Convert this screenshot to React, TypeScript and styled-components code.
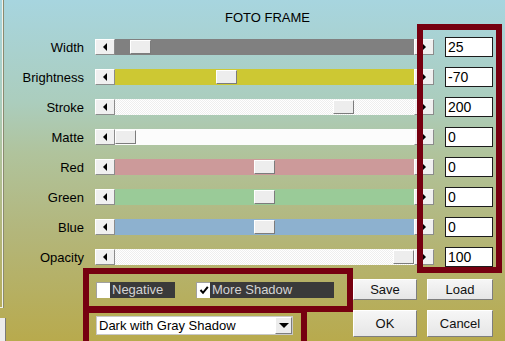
import styled, { createGlobalStyle } from "styled-components";

const GlobalStyle = createGlobalStyle`
  html, body {
    margin: 0;
    padding: 0;
  }
  body {
    width: 505px;
    height: 341px;
    overflow: hidden;
    font-family: "Liberation Sans", Arial, sans-serif;
  }
`;

const DITHER =
  "repeating-conic-gradient(#ffffff 0 25%, #eeeeee 0 50%) 0 0 / 2px 2px";

interface SliderRow {
  label: string;
  value: string;
  track: string;
  thumb: number;
}

const rows: SliderRow[] = [
  { label: "Width", value: "25", track: "#808080", thumb: 15 },
  { label: "Brightness", value: "-70", track: "#cdc833", thumb: 101 },
  { label: "Stroke", value: "200", track: DITHER, thumb: 218 },
  { label: "Matte", value: "0", track: "#fcfcfc", thumb: 0 },
  { label: "Red", value: "0", track: "#cc9a9a", thumb: 139 },
  { label: "Green", value: "0", track: "#9acb98", thumb: 139 },
  { label: "Blue", value: "0", track: "#8db1cf", thumb: 139 },
  { label: "Opacity", value: "100", track: DITHER, thumb: 278 },
];

const App = () => {
  return (
    <>
      <GlobalStyle />
      <Window>
        <Side>
          <SidePanel />
          <SideButton />
        </Side>
        <Main>
          <Title>FOTO FRAME</Title>
          <Rows>
            {rows.map((row) => (
              <Row key={row.label}>
                <Label>{row.label}</Label>
                <Slider>
                  <ArrowButton>
                    <Arrow $dir="left" />
                  </ArrowButton>
                  <Track $bg={row.track}>
                    <Thumb $pos={row.thumb} />
                  </Track>
                  <ArrowButton>
                    <Arrow $dir="right" />
                  </ArrowButton>
                </Slider>
                <ValueBox>{row.value}</ValueBox>
              </Row>
            ))}
          </Rows>
          <Bottom>
            <Checks>
              <Check>
                <CheckBox />
                <CheckLabel $w={65}>Negative</CheckLabel>
              </Check>
              <Check>
                <CheckBox>
                  <svg width="10" height="10" viewBox="0 0 10 10">
                    <path
                      d="M1.5 5 L4 7.8 L8.8 1.8"
                      fill="none"
                      stroke="#000"
                      strokeWidth="2"
                    />
                  </svg>
                </CheckBox>
                <CheckLabel $w={124}>More Shadow</CheckLabel>
              </Check>
            </Checks>
            <Button>Save</Button>
            <Button>Load</Button>
            <DropCell>
              <Dropdown>
                <DropText>Dark with Gray Shadow</DropText>
                <DropButton>
                  <Arrow $dir="down" />
                </DropButton>
              </Dropdown>
            </DropCell>
            <Button>OK</Button>
            <Button>Cancel</Button>
          </Bottom>
        </Main>
        <Highlight $x={417} $y={24} $w={85} $h={249} />
        <Highlight $x={83} $y={268} $w={270} $h={44} />
        <Highlight $x={83} $y={307} $w={224} $h={44} />
      </Window>
    </>
  );
};

const Window = styled.div`
  position: relative;
  width: 505px;
  height: 341px;
  display: flex;
  overflow: hidden;
  background: linear-gradient(
    to bottom,
    #a7d5df 0%,
    #abcdbd 30%,
    #b0c39c 45%,
    #b3b67b 68%,
    #b8aa4d 100%
  );
`;

const Side = styled.div`
  width: 6px;
  display: flex;
  flex-direction: column;
`;

const SidePanel = styled.div`
  width: 2px;
  height: 307px;
  border-right: 1px solid #f2f2ea;
  border-bottom: 1px solid #f2f2ea;
  box-shadow: 1px 0 0 #8a8a70;
`;

const SideButton = styled.div`
  margin-top: 10px;
  width: 6px;
  height: 23px;
  background: #ececec;
  border-right: 1px solid #7a7a7a;
  box-sizing: border-box;
`;

const Main = styled.div`
  flex: 1;
  display: flex;
  flex-direction: column;
`;

const Title = styled.div`
  padding: 10px 0 0 219px;
  font-size: 13px;
  line-height: 15px;
  color: #000;
`;

const Rows = styled.div`
  margin-top: 7px;
  display: flex;
  flex-direction: column;
`;

const Row = styled.div`
  height: 30px;
  display: grid;
  grid-template-columns: 78px 339px 48px;
  column-gap: 11px;
  align-items: center;
`;

const Label = styled.div`
  text-align: right;
  font-size: 13px;
  color: #000;
`;

const Slider = styled.div`
  height: 16px;
  display: flex;
`;

const ArrowButton = styled.div`
  width: 20px;
  height: 16px;
  box-sizing: border-box;
  background: #f0f0f0;
  border-top: 1px solid #ffffff;
  border-left: 1px solid #ffffff;
  border-right: 1px solid #8c8c8c;
  border-bottom: 1px solid #8c8c8c;
  display: flex;
  align-items: center;
  justify-content: center;
`;

const Arrow = styled.span<{ $dir: "left" | "right" | "down" }>`
  width: 0;
  height: 0;
  ${({ $dir }) =>
    $dir === "left"
      ? "border-top: 4px solid transparent; border-bottom: 4px solid transparent; border-right: 4px solid #000;"
      : $dir === "right"
        ? "border-top: 4px solid transparent; border-bottom: 4px solid transparent; border-left: 4px solid #000;"
        : "border-left: 5px solid transparent; border-right: 5px solid transparent; border-top: 5px solid #000;"}
`;

const Track = styled.div<{ $bg: string }>`
  position: relative;
  flex: 1;
  background: ${({ $bg }) => $bg};
`;

const Thumb = styled.div<{ $pos: number }>`
  position: absolute;
  top: 1px;
  left: ${({ $pos }) => $pos}px;
  width: 21px;
  height: 14px;
  box-sizing: border-box;
  background: #ededed;
  border-top: 1px solid #ffffff;
  border-left: 1px solid #ffffff;
  border-right: 1px solid #7c7c7c;
  border-bottom: 1px solid #7c7c7c;
`;

const ValueBox = styled.div`
  width: 48px;
  height: 20px;
  box-sizing: border-box;
  background: #fff;
  border: 1px solid #1c1c1c;
  padding: 0 2px;
  font-size: 14px;
  line-height: 18px;
  color: #000;
`;

const Bottom = styled.div`
  margin-top: 7px;
  padding-left: 90px;
  display: grid;
  grid-template-columns: 247px 64px 66px;
  grid-template-rows: 21px 27px;
  column-gap: 10px;
  row-gap: 10px;
`;

const Checks = styled.div`
  display: flex;
  align-items: center;
  gap: 21px;
`;

const Check = styled.div`
  display: flex;
  align-items: center;
`;

const CheckBox = styled.div`
  width: 14px;
  height: 16px;
  box-sizing: border-box;
  background: #fff;
  border-top: 1px solid #a0a0a0;
  border-left: 1px solid #a0a0a0;
  display: flex;
  align-items: center;
  justify-content: center;
`;

const CheckLabel = styled.div<{ $w: number }>`
  width: ${({ $w }) => $w}px;
  height: 16px;
  background: #3a3a3a;
  color: #d4d4d4;
  font-size: 13px;
  line-height: 16px;
  padding-left: 2px;
  box-sizing: border-box;
`;

const Button = styled.div`
  box-sizing: border-box;
  background: linear-gradient(#f6f6f6, #e6e6e6);
  border-top: 1px solid #ffffff;
  border-left: 1px solid #ffffff;
  border-right: 1px solid #7e7e7e;
  border-bottom: 1px solid #7e7e7e;
  display: flex;
  align-items: center;
  justify-content: center;
  font-size: 13px;
  color: #111;
`;

const DropCell = styled.div`
  padding-top: 6px;
`;

const Dropdown = styled.div`
  width: 197px;
  height: 19px;
  box-sizing: border-box;
  background: #fff;
  border: 1px solid #c8c8c8;
  display: flex;
  align-items: center;
`;

const DropText = styled.div`
  flex: 1;
  padding-left: 2px;
  font-size: 13px;
  color: #000;
`;

const DropButton = styled.div`
  width: 17px;
  height: 17px;
  box-sizing: border-box;
  background: #ececec;
  border-top: 1px solid #ffffff;
  border-left: 1px solid #ffffff;
  border-right: 1px solid #7e7e7e;
  border-bottom: 1px solid #7e7e7e;
  display: flex;
  align-items: center;
  justify-content: center;
`;

const Highlight = styled.div<{ $x: number; $y: number; $w: number; $h: number }>`
  position: absolute;
  left: ${({ $x }) => $x}px;
  top: ${({ $y }) => $y}px;
  width: ${({ $w }) => $w}px;
  height: ${({ $h }) => $h}px;
  box-sizing: border-box;
  border: 6px solid #760010;
  pointer-events: none;
`;

export default App;
